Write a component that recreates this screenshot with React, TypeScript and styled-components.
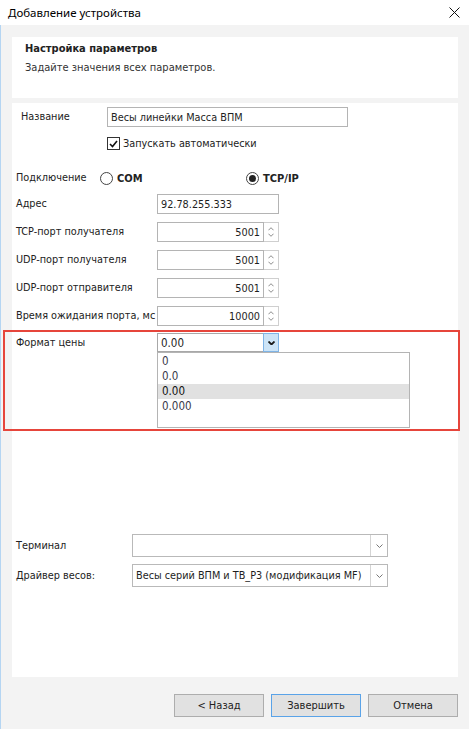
import React from 'react';
import styled, { createGlobalStyle } from 'styled-components';

const FONT = `"DejaVu Sans Condensed", "Liberation Sans", sans-serif`;

const Global = createGlobalStyle`
  html, body { margin: 0; padding: 0; background: #fff; }
  body { font-family: ${FONT}; font-size: 10.8px; color: #1e1e1e; }
  * { box-sizing: border-box; }
`;

const Window = styled.div`
  position: relative;
  width: 469px;
  height: 729px;
  display: flex;
  flex-direction: column;
  overflow: hidden;
  background: #fff;
`;

const TitleBar = styled.div`
  height: 25px;
  flex-shrink: 0;
  display: flex;
  align-items: center;
  justify-content: space-between;
  padding: 0 9px 1px 8px;
  background: #fff;
`;

const TitleText = styled.span`
  font-family: "Noto Sans", "Liberation Sans", sans-serif;
  font-size: 11.5px;
  color: #000;
`;

const Body = styled.div`
  flex: 1;
  display: flex;
  flex-direction: column;
  background: #f3f3f3;
  border-left: 1px solid #b5d5f2;
  padding: 12px 11px 12px 11px;
`;

const HeaderPanel = styled.div`
  height: 61px;
  background: #fff;
  padding: 5px 13px 0;
  display: flex;
  flex-direction: column;
`;

const HeaderTitle = styled.div`
  font-weight: bold;
  font-size: 11px;
  line-height: 13px;
  color: #222;
`;

const HeaderSub = styled.div`
  font-size: 11px;
  line-height: 13px;
  margin-top: 6px;
  color: #333;
`;

const ContentPanel = styled.div`
  flex: 1;
  margin-top: 5px;
  background: #fff;
  display: flex;
  flex-direction: column;
`;

const Row = styled.div<{ $mt: number; $pl?: number }>`
  display: flex;
  align-items: center;
  margin-top: ${p => p.$mt}px;
  padding-left: ${p => p.$pl ?? 4}px;
`;

const TopRow = styled(Row)`
  align-items: flex-start;
`;

const Label = styled.span<{ $w: number; $lh?: number }>`
  width: ${p => p.$w}px;
  flex-shrink: 0;
  white-space: nowrap;
  line-height: ${p => p.$lh ?? 14}px;
  color: #222;
`;

const TextBox = styled.div<{ $w: number }>`
  width: ${p => p.$w}px;
  height: 20px;
  border: 1px solid #b4b4b4;
  background: #fff;
  display: flex;
  align-items: center;
  padding: 0 3px;
  white-space: nowrap;
  color: #1e1e1e;
`;

const CheckLabel = styled.label`
  display: flex;
  align-items: center;
  gap: 3px;
  color: #222;
`;

const CheckBox = styled.span`
  width: 13px;
  height: 13px;
  border: 1px solid #333;
  background: #fff;
  display: flex;
  align-items: center;
  justify-content: center;
`;

const Radio = styled.span<{ $checked?: boolean }>`
  width: 13px;
  height: 13px;
  border-radius: 50%;
  border: 1px solid #444;
  background: #fff;
  display: flex;
  align-items: center;
  justify-content: center;
  &::after {
    content: '';
    width: 7px;
    height: 7px;
    border-radius: 50%;
    background: ${p => (p.$checked ? '#222' : 'transparent')};
  }
`;

const RadioOption = styled.span<{ $w?: number }>`
  display: flex;
  align-items: center;
  gap: 4px;
  width: ${p => (p.$w ? `${p.$w}px` : 'auto')};
  font-weight: bold;
  font-size: 11px;
  color: #222;
`;

const SpinField = styled.div`
  display: flex;
  width: 122px;
  height: 20px;
`;

const SpinText = styled.div`
  flex: 1;
  border: 1px solid #b4b4b4;
  background: #fff;
  padding: 0 3px;
  display: flex;
  align-items: center;
  justify-content: flex-end;
`;

const SpinButtons = styled.div`
  width: 15px;
  border: 1px solid #cfcfcf;
  border-left: none;
  background: #fff;
  display: flex;
  flex-direction: column;
  align-items: center;
  justify-content: center;
  gap: 2px;
`;

const FormatCombo = styled.div`
  display: flex;
  width: 122px;
  height: 19px;
`;

const ComboText = styled.div`
  flex: 1;
  border: 1px solid #a8a8a8;
  border-right: none;
  background: #fff;
  padding: 0 3px;
  display: flex;
  align-items: center;
  font-size: 11.5px;
`;

const ComboButtonActive = styled.div`
  width: 16px;
  background: #cce4f7;
  border: 1px solid #7fb4e6;
  display: flex;
  align-items: center;
  justify-content: center;
`;

const ListBox = styled.div`
  width: 253px;
  height: 76px;
  border: 1px solid #b4b4b4;
  background: #fff;
  padding-top: 1px;
`;

const ListItem = styled.div<{ $selected?: boolean }>`
  height: 15px;
  line-height: 15px;
  padding-left: 4px;
  font-size: 11.5px;
  background: ${p => (p.$selected ? '#e1e1e1' : 'transparent')};
  color: ${p => (p.$selected ? '#111' : '#3a3a4a')};
`;

const Column = styled.div`
  display: flex;
  flex-direction: column;
`;

const WideCombo = styled.div`
  display: flex;
  width: 256px;
  height: 23px;
  border: 1px solid #b9b9b9;
  background: #fff;
`;

const WideComboText = styled.div`
  flex: 1;
  display: flex;
  align-items: center;
  padding: 0 3px;
  white-space: nowrap;
`;

const WideComboButton = styled.div`
  width: 17px;
  border-left: 1px solid #d4d4d4;
  display: flex;
  align-items: center;
  justify-content: center;
`;

const Footer = styled.div`
  margin-top: 17px;
  height: 23px;
  display: flex;
  justify-content: flex-end;
  gap: 7px;
`;

const Button = styled.button<{ $default?: boolean }>`
  width: 90px;
  height: 23px;
  background: #e1e1e1;
  border: 1px solid ${p => (p.$default ? '#5aa3e8' : '#adadad')};
  font-family: ${FONT};
  font-size: 11px;
  color: #222;
  padding: 0;
`;

const Highlight = styled.div`
  position: absolute;
  left: 3px;
  top: 330px;
  width: 457px;
  height: 101px;
  border: 2px solid #e6453b;
  pointer-events: none;
`;

const Chevron = ({ up, color = '#666', w = 7, sw = 1 }: { up?: boolean; color?: string; w?: number; sw?: number }) => (
  <svg width={w} height={4} viewBox="0 0 7 4">
    <path d={up ? 'M0.5 3.5 L3.5 0.5 L6.5 3.5' : 'M0.5 0.5 L3.5 3.5 L6.5 0.5'} fill="none" stroke={color} strokeWidth={sw} />
  </svg>
);

const Spin = ({ value }: { value: string }) => (
  <SpinField>
    <SpinText>{value}</SpinText>
    <SpinButtons>
      <Chevron up color="#7a7a7a" w={6} />
      <Chevron color="#7a7a7a" w={6} />
    </SpinButtons>
  </SpinField>
);

export default function App() {
  return (
    <>
      <Global />
      <Window>
        <TitleBar>
          <TitleText>Добавление устройства</TitleText>
          <svg width="11" height="11" viewBox="0 0 11 11">
            <path d="M0.5 0.5 L10.5 10.5 M10.5 0.5 L0.5 10.5" stroke="#111" strokeWidth="1" />
          </svg>
        </TitleBar>
        <Body>
          <HeaderPanel>
            <HeaderTitle>Настройка параметров</HeaderTitle>
            <HeaderSub>Задайте значения всех параметров.</HeaderSub>
          </HeaderPanel>
          <ContentPanel>
            <Row $mt={4} $pl={9}>
              <Label $w={86}>Название</Label>
              <TextBox $w={241}>Весы линейки Масса ВПМ</TextBox>
            </Row>
            <Row $mt={10} $pl={95}>
              <CheckLabel>
                <CheckBox>
                  <svg width="9" height="8" viewBox="0 0 9 8">
                    <path d="M1 4 L3.5 6.5 L8 1" fill="none" stroke="#111" strokeWidth="1.6" />
                  </svg>
                </CheckBox>
                Запускать автоматически
              </CheckLabel>
            </Row>
            <Row $mt={21}>
              <Label $w={84}>Подключение</Label>
              <RadioOption $w={146}>
                <Radio />
                COM
              </RadioOption>
              <RadioOption>
                <Radio $checked />
                TCP/IP
              </RadioOption>
            </Row>
            <Row $mt={9}>
              <Label $w={141}>Адрес</Label>
              <TextBox $w={122}>92.78.255.333</TextBox>
            </Row>
            <Row $mt={8}>
              <Label $w={141}>TCP-порт получателя</Label>
              <Spin value="5001" />
            </Row>
            <Row $mt={8}>
              <Label $w={141}>UDP-порт получателя</Label>
              <Spin value="5001" />
            </Row>
            <Row $mt={8}>
              <Label $w={141}>UDP-порт отправителя</Label>
              <Spin value="5001" />
            </Row>
            <Row $mt={8}>
              <Label $w={141}>Время ожидания порта, мс</Label>
              <Spin value="10000" />
            </Row>
            <TopRow $mt={7}>
              <Label $w={141} $lh={19}>Формат цены</Label>
              <Column>
                <FormatCombo>
                  <ComboText>0.00</ComboText>
                  <ComboButtonActive>
                    <Chevron color="#1a1a1a" w={7} sw={1.8} />
                  </ComboButtonActive>
                </FormatCombo>
                <ListBox>
                  <ListItem>0</ListItem>
                  <ListItem>0.0</ListItem>
                  <ListItem $selected>0.00</ListItem>
                  <ListItem>0.000</ListItem>
                </ListBox>
              </Column>
            </TopRow>
            <Row $mt={106}>
              <Label $w={116}>Терминал</Label>
              <WideCombo>
                <WideComboText />
                <WideComboButton>
                  <Chevron color="#777" w={7} />
                </WideComboButton>
              </WideCombo>
            </Row>
            <Row $mt={7}>
              <Label $w={116}>Драйвер весов:</Label>
              <WideCombo>
                <WideComboText>Весы серий ВПМ и ТВ_Р3 (модификация MF)</WideComboText>
                <WideComboButton>
                  <Chevron color="#777" w={7} />
                </WideComboButton>
              </WideCombo>
            </Row>
          </ContentPanel>
          <Footer>
            <Button>&lt; Назад</Button>
            <Button $default>Завершить</Button>
            <Button>Отмена</Button>
          </Footer>
        </Body>
        <Highlight />
      </Window>
    </>
  );
}
